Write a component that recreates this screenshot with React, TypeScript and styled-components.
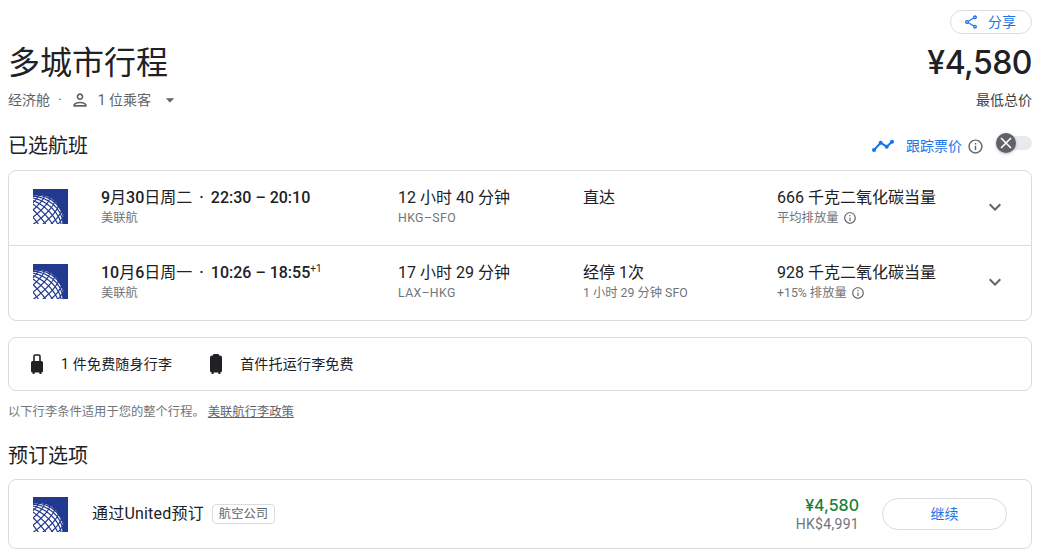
import React from "react";
import styled, { createGlobalStyle } from "styled-components";

const FONT = `Roboto, "Noto Sans CJK SC", "Liberation Sans", sans-serif`;
const PRICE_FONT = `Inter, Roboto, "Liberation Sans", sans-serif`;

const Global = createGlobalStyle`
  html, body { margin: 0; padding: 0; background: #fff; }
  body { font-family: ${FONT}; color: #202124; }
  * { box-sizing: border-box; }
`;

const Page = styled.div`
  width: 1049px;
  height: 557px;
  padding: 10px 17px 0 8px;
  overflow: hidden;
`;
const ShareRow = styled.div`
  display: flex;
  justify-content: flex-end;
`;
const ShareButton = styled.button`
  display: flex;
  align-items: center;
  height: 24px;
  width: 82px;
  padding: 0 0 0 12px;
  gap: 9px;
  background: #fff;
  border: 1px solid #dadce0;
  border-radius: 12px;
  color: #1a73e8;
  font: 400 14px/16px ${FONT};
`;
const TitleRow = styled.div`
  display: flex;
  justify-content: space-between;
  align-items: center;
  height: 40px;
  margin-top: 9px;
`;
const Title = styled.h1`
  margin: 0;
  font: 400 32px/40px ${FONT};
  color: #202124;
`;
const BigPrice = styled.div`
  font: 500 32px/40px ${PRICE_FONT};
  letter-spacing: -0.5px;
  color: #202124;
`;
const SubRow = styled.div`
  display: flex;
  justify-content: space-between;
  align-items: center;
  height: 20px;
  margin-top: 7px;
  font: 400 14px/20px ${FONT};
  color: #3c4043;
`;
const Meta = styled.div`
  display: flex;
  align-items: center;
  color: #5f6368;
`;
const MetaDot = styled.span`
  margin: 0 8px;
`;
const MetaPassengers = styled.span`
  margin: 0 9px 0 8px;
`;
const SectionHeader = styled.div<{ $mt: number }>`
  display: flex;
  justify-content: space-between;
  align-items: center;
  height: 28px;
  margin-top: ${(p) => p.$mt}px;
`;
const SectionTitle = styled.h2`
  margin: 0;
  font: 400 20px/28px ${FONT};
  color: #202124;
`;
const Track = styled.div`
  display: flex;
  align-items: center;
`;
const TrendIcon = styled.svg`
  flex: none;
  width: 22px;
  height: 14px;
  margin-bottom: 2px;
`;
const TrackLabel = styled.span`
  margin: 0 5px 0 12px;
  font: 400 14px/20px ${FONT};
  color: #1a73e8;
`;
const Switch = styled.div`
  position: relative;
  width: 36px;
  height: 14px;
  margin: 0 0 6px 12px;
  border-radius: 7px;
  background: #e8eaed;
`;
const Thumb = styled.div`
  position: absolute;
  left: 0;
  top: -3px;
  width: 20px;
  height: 20px;
  border-radius: 50%;
  background: #5f6368;
  box-shadow: 0 1px 3px rgba(60, 64, 67, 0.35);
  display: flex;
  align-items: center;
  justify-content: center;
`;
const Card = styled.div<{ $mt: number }>`
  margin-top: ${(p) => p.$mt}px;
  border: 1px solid #dadce0;
  border-radius: 8px;
  background: #fff;
`;
const FlightRow = styled.div<{ $last?: boolean }>`
  display: grid;
  grid-template-columns: 35px 330px 185px 194px 1fr 24px;
  height: ${(p) => (p.$last ? 74 : 75)}px;
  padding: 18px 24px 0 24px;
  border-bottom: ${(p) => (p.$last ? "none" : "1px solid #dadce0")};
`;
const TextCol = styled.div<{ $offset?: number }>`
  margin: -1px 0 0 ${(p) => p.$offset ?? 0}px;
`;
const Primary = styled.div`
  font: 400 16px/20px ${FONT};
  color: #202124;
  white-space: nowrap;
`;
const Strong = styled.span`
  font-weight: 500;
`;
const TimeDot = styled.span`
  margin: 0 7px;
  font-weight: 500;
`;
const Sup = styled.sup`
  font-size: 10px;
  line-height: 0;
  font-weight: 400;
`;
const Secondary = styled.div`
  display: flex;
  align-items: center;
  gap: 4px;
  margin-top: 1px;
  font: 400 12.3px/18px ${FONT};
  color: #70757a;
  white-space: nowrap;
`;
const Code = styled.span`
  letter-spacing: 0.4px;
`;
const Chevron = styled.svg`
  margin-top: 6px;
  width: 24px;
  height: 24px;
  fill: #5f6368;
`;
const BagCard = styled(Card)`
  display: flex;
  align-items: center;
  height: 54px;
  padding: 0 0 1px 21px;
  font: 400 14px/20px ${FONT};
  letter-spacing: 0.2px;
  color: #202124;
`;
const Bag = styled.div`
  display: flex;
  align-items: center;
  gap: 17px;
  margin-right: 37px;
`;
const Note = styled.div`
  margin-top: 11px;
  font: 400 12.3px/20px ${FONT};
  color: #70757a;
`;
const PolicyLink = styled.a`
  margin-left: 3px;
  color: #5f6368;
  text-decoration: underline;
`;
const BookRow = styled(Card)`
  display: flex;
  align-items: center;
  height: 70px;
  padding: 0 24px;
`;
const BookName = styled.div`
  margin-left: 24px;
  font: 400 16px/20px ${FONT};
  letter-spacing: 0.2px;
  color: #202124;
`;
const Tag = styled.span`
  margin-left: 8px;
  padding: 0 6px;
  height: 20px;
  border: 1px solid #dadce0;
  border-radius: 4px;
  font: 400 12.3px/18px ${FONT};
  color: #5f6368;
`;
const PriceBox = styled.div`
  margin-left: auto;
  text-align: right;
`;
const GreenPrice = styled.div`
  font: 500 16px/20px ${PRICE_FONT};
  color: #188038;
`;
const LocalPrice = styled.div`
  font: 400 14px/18px ${FONT};
  letter-spacing: 0.3px;
  color: #70757a;
`;
const Continue = styled.button`
  width: 125px;
  height: 32px;
  margin-left: 23px;
  background: #fff;
  border: 1px solid #dadce0;
  border-radius: 16px;
  color: #1a73e8;
  font: 400 14px/20px ${FONT};
`;
const Ico = styled.svg<{ $size: number; $color: string }>`
  width: ${(p) => p.$size}px;
  height: ${(p) => p.$size}px;
  fill: ${(p) => p.$color};
  flex: none;
`;
const LogoSvg = styled.svg`
  flex: none;
  display: block;
  width: 35px;
  height: 35px;
`;
const BagSvg = styled.svg`
  flex: none;
  width: 14px;
  height: 20px;
`;

const INFO =
  "M11 7h2v2h-2zm0 4h2v6h-2zm1-9C6.48 2 2 6.48 2 12s4.48 10 10 10 10-4.48 10-10S17.52 2 12 2zm0 18c-4.41 0-8-3.59-8-8s3.59-8 8-8 8 3.59 8 8-3.59 8-8 8z";
const SHARE =
  "M18 16.08c-.76 0-1.44.3-1.96.77L8.91 12.7c.05-.23.09-.46.09-.7s-.04-.47-.09-.7l7.05-4.11c.54.5 1.25.81 2.04.81 1.66 0 3-1.34 3-3s-1.34-3-3-3-3 1.34-3 3c0 .24.04.47.09.7L8.04 9.81C7.5 9.31 6.79 9 6 9c-1.66 0-3 1.34-3 3s1.34 3 3 3c.79 0 1.5-.31 2.04-.81l7.12 4.16c-.05.21-.08.43-.08.65 0 1.61 1.31 2.92 2.92 2.92 1.61 0 2.92-1.31 2.92-2.92s-1.31-2.92-2.92-2.92zM18 4c.55 0 1 .45 1 1s-.45 1-1 1-1-.45-1-1 .45-1 1-1zM6 13c-.55 0-1-.45-1-1s.45-1 1-1 1 .45 1 1-.45 1-1 1zm12 7.02c-.55 0-1-.45-1-1s.45-1 1-1 1 .45 1 1-.45 1-1 1z";
const PERSON =
  "M12 6c1.1 0 2 .9 2 2s-.9 2-2 2-2-.9-2-2 .9-2 2-2m0 10c2.7 0 5.8 1.29 6 2H6c.23-.72 3.31-2 6-2m0-12C9.79 4 8 5.79 8 8s1.79 4 4 4 4-1.79 4-4-1.79-4-4-4zm0 10c-2.67 0-8 1.34-8 4v2h16v-2c0-2.66-5.33-4-8-4z";

const Info = ({ size = 14 }: { size?: number }) => (
  <Ico $size={size} $color="#5f6368" viewBox="0 0 24 24">
    <path d={INFO} />
  </Ico>
);

/* Orthographic graticule of the airline's globe, seen with its centre low on the left. */
const GLOBE = { cx: 3, cy: 32, r: 28, roll: (38 * Math.PI) / 180, tilt: (14 * Math.PI) / 180 };
const project = (lat: number, lon: number): [number, number] | null => {
  const la = (lat * Math.PI) / 180;
  const lo = (lon * Math.PI) / 180;
  const x = Math.cos(la) * Math.sin(lo);
  const y0 = Math.sin(la);
  const z0 = Math.cos(la) * Math.cos(lo);
  const y = y0 * Math.cos(GLOBE.tilt) - z0 * Math.sin(GLOBE.tilt);
  const z = y0 * Math.sin(GLOBE.tilt) + z0 * Math.cos(GLOBE.tilt);
  if (z < 0) return null;
  const xr = x * Math.cos(GLOBE.roll) - y * Math.sin(GLOBE.roll);
  const yr = x * Math.sin(GLOBE.roll) + y * Math.cos(GLOBE.roll);
  return [GLOBE.cx + GLOBE.r * xr, GLOBE.cy - GLOBE.r * yr];
};
const toPath = (pts: ([number, number] | null)[]) => {
  let d = "";
  let pen = false;
  pts.forEach((p) => {
    if (!p) {
      pen = false;
      return;
    }
    d += `${pen ? "L" : "M"}${p[0].toFixed(2)} ${p[1].toFixed(2)}`;
    pen = true;
  });
  return d;
};
const range = (a: number, b: number, s: number) => {
  const out: number[] = [];
  for (let v = a; v <= b; v += s) out.push(v);
  return out;
};
const GRATICULE = [
  ...range(-84, 84, 12).map((lat) => toPath(range(-180, 180, 3).map((lon) => project(lat, lon)))),
  ...range(-180, 168, 12).map((lon) => toPath(range(-90, 90, 3).map((lat) => project(lat, lon)))),
].join("");

const Globe = () => (
  <LogoSvg viewBox="0 0 35 35">
    <rect width="35" height="35" fill="#21398f" />
    <circle cx={GLOBE.cx} cy={GLOBE.cy} r={GLOBE.r} fill="#fff" />
    <path d={GRATICULE} fill="none" stroke="#21398f" strokeWidth="1.2" />
  </LogoSvg>
);

const Trend = () => (
  <TrendIcon viewBox="0 0 22 14">
    <polyline points="2,12 8.7,4.7 14.7,8.7 20,3.7" fill="none" stroke="#1a73e8" strokeWidth="2" />
    <circle cx="2" cy="12" r="2" fill="#1a73e8" />
    <circle cx="8.7" cy="4.7" r="2" fill="#1a73e8" />
    <circle cx="14.7" cy="8.7" r="2" fill="#1a73e8" />
    <circle cx="20" cy="3.7" r="2" fill="#1a73e8" />
  </TrendIcon>
);

const CarryOn = () => (
  <BagSvg viewBox="0 0 14 20">
    <path d="M4 8V2.2C4 1.5 4.5 1 5.2 1h3.6c.7 0 1.2.5 1.2 1.2V8" fill="none" stroke="#202124" strokeWidth="1.6" />
    <rect x="1" y="7" width="12" height="11.5" rx="1.6" fill="#202124" />
    <rect x="2.6" y="18" width="2" height="2" fill="#202124" />
    <rect x="9.4" y="18" width="2" height="2" fill="#202124" />
  </BagSvg>
);

const Checked = () => (
  <BagSvg viewBox="0 0 14 20">
    <rect x="4" y="0" width="6" height="2.4" rx="1" fill="#202124" />
    <rect x="1" y="1.6" width="12" height="16.9" rx="1.8" fill="#202124" />
    <rect x="2.6" y="18" width="2" height="2" fill="#202124" />
    <rect x="9.4" y="18" width="2" height="2" fill="#202124" />
  </BagSvg>
);

const ChevronDown = () => (
  <Chevron viewBox="0 0 24 24">
    <path d="M16.59 8.59L12 13.17 7.41 8.59 6 10l6 6 6-6z" />
  </Chevron>
);

export default function App() {
  return (
    <Page>
      <Global />
      <ShareRow>
        <ShareButton>
          <Ico $size={16} $color="#1a73e8" viewBox="0 0 24 24">
            <path d={SHARE} />
          </Ico>
          <span>分享</span>
        </ShareButton>
      </ShareRow>
      <TitleRow>
        <Title>多城市行程</Title>
        <BigPrice>¥4,580</BigPrice>
      </TitleRow>
      <SubRow>
        <Meta>
          <span>经济舱</span>
          <MetaDot>·</MetaDot>
          <Ico $size={20} $color="#5f6368" viewBox="0 0 24 24">
            <path d={PERSON} />
          </Ico>
          <MetaPassengers>1 位乘客</MetaPassengers>
          <Ico $size={20} $color="#5f6368" viewBox="0 0 24 24">
            <path d="M7 10l5 5 5-5z" />
          </Ico>
        </Meta>
        <span>最低总价</span>
      </SubRow>
      <SectionHeader $mt={22}>
        <SectionTitle>已选航班</SectionTitle>
        <Track>
          <Trend />
          <TrackLabel>跟踪票价</TrackLabel>
          <Info size={17} />
          <Switch>
            <Thumb>
              <svg width="12" height="12" viewBox="0 0 12 12">
                <path d="M1 1l10 10M11 1L1 11" stroke="#fff" strokeWidth="1.6" />
              </svg>
            </Thumb>
          </Switch>
        </Track>
      </SectionHeader>
      <Card $mt={10}>
        <FlightRow>
          <Globe />
          <TextCol $offset={33}>
            <Primary>
              <Strong>9</Strong>月<Strong>30</Strong>日周二<TimeDot>·</TimeDot><Strong>22:30 – 20:10</Strong>
            </Primary>
            <Secondary>美联航</Secondary>
          </TextCol>
          <TextCol>
            <Primary>12 小时 40 分钟</Primary>
            <Secondary><Code>HKG–SFO</Code></Secondary>
          </TextCol>
          <TextCol>
            <Primary>直达</Primary>
          </TextCol>
          <TextCol>
            <Primary>666 千克二氧化碳当量</Primary>
            <Secondary>平均排放量 <Info size={14} /></Secondary>
          </TextCol>
          <ChevronDown />
        </FlightRow>
        <FlightRow $last>
          <Globe />
          <TextCol $offset={33}>
            <Primary>
              <Strong>10</Strong>月<Strong>6</Strong>日周一<TimeDot>·</TimeDot><Strong>10:26 – 18:55</Strong><Sup>+1</Sup>
            </Primary>
            <Secondary>美联航</Secondary>
          </TextCol>
          <TextCol>
            <Primary>17 小时 29 分钟</Primary>
            <Secondary><Code>LAX–HKG</Code></Secondary>
          </TextCol>
          <TextCol>
            <Primary>经停 1次</Primary>
            <Secondary>1 小时 29 分钟 SFO</Secondary>
          </TextCol>
          <TextCol>
            <Primary>928 千克二氧化碳当量</Primary>
            <Secondary>+15% 排放量 <Info size={14} /></Secondary>
          </TextCol>
          <ChevronDown />
        </FlightRow>
      </Card>
      <BagCard $mt={16}>
        <Bag><CarryOn /><span>1 件免费随身行李</span></Bag>
        <Bag><Checked /><span>首件托运行李免费</span></Bag>
      </BagCard>
      <Note>
        以下行李条件适用于您的整个行程。<PolicyLink>美联航行李政策</PolicyLink>
      </Note>
      <SectionHeader $mt={20}>
        <SectionTitle>预订选项</SectionTitle>
      </SectionHeader>
      <BookRow $mt={9}>
        <Globe />
        <BookName>通过United预订</BookName>
        <Tag>航空公司</Tag>
        <PriceBox>
          <GreenPrice>¥4,580</GreenPrice>
          <LocalPrice>HK$4,991</LocalPrice>
        </PriceBox>
        <Continue>继续</Continue>
      </BookRow>
    </Page>
  );
}
